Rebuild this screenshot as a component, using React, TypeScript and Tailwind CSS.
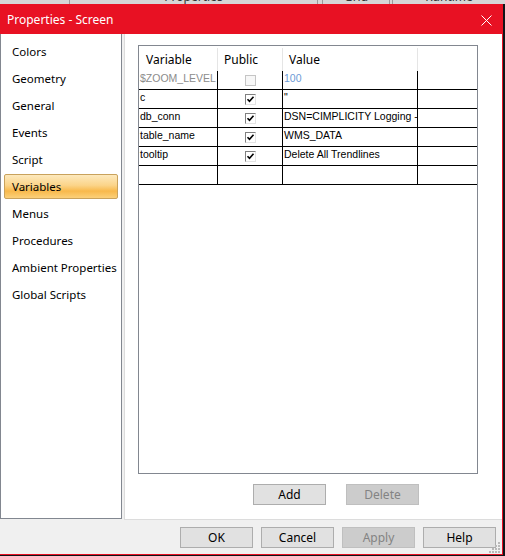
import React from 'react'

const ui = '"Noto Sans", "Open Sans", sans-serif'
const grid = '"Liberation Sans", Arial, sans-serif'

const navItems = [
  'Colors',
  'Geometry',
  'General',
  'Events',
  'Script',
  'Variables',
  'Menus',
  'Procedures',
  'Ambient Properties',
  'Global Scripts',
]

type Row = { name: string; pub: boolean | null; value: string }

const rows: Row[] = [
  { name: '$ZOOM_LEVEL', pub: null, value: '100' },
  { name: 'c', pub: true, value: '"' },
  { name: 'db_conn', pub: true, value: 'DSN=CIMPLICITY Logging - Prop' },
  { name: 'table_name', pub: true, value: 'WMS_DATA' },
  { name: 'tooltip', pub: true, value: 'Delete All Trendlines' },
  { name: '', pub: false, value: '' },
]

function CheckBox({ state }: { state: boolean | null }) {
  if (state === null) {
    return <div className="h-[11px] w-[11px] border border-[#c5c5c5] bg-[#f7f7f7]" />
  }
  return (
    <div className="h-[11px] w-[11px] border-t border-l border-t-[#808080] border-l-[#808080] border-r border-b border-r-[#e3e3e3] border-b-[#e3e3e3] bg-white flex items-center justify-center">
      <svg width="9" height="9" viewBox="0 0 9 9">
        <path d="M1.5 4.2 L3.5 6.3 L7.5 1.8" stroke="#000" strokeWidth="1.6" fill="none" />
      </svg>
    </div>
  )
}

function Btn({ label, disabled }: { label: string; disabled?: boolean }) {
  return (
    <div
      className={`w-[73px] h-[21px] flex items-center justify-center text-[12px] border ${
        disabled ? 'bg-[#cccccc] border-[#bfbfbf] text-[#838383]' : 'bg-[#e1e1e1] border-[#adadad] text-black'
      }`}
    >
      {label}
    </div>
  )
}

export default function App() {
  return (
    <div className="relative w-[505px] h-[556px] overflow-hidden bg-[#101418]" style={{ fontFamily: ui }}>
      {/* background app tabs peeking above the dialog */}
      <div className="flex h-[4px] bg-[#d6d6d6] overflow-hidden text-[12px] leading-[12px] text-[#333]">
        <div className="w-[70px] border-r border-[#9a9a9a]" />
        <div className="w-[248px] border-r border-[#9a9a9a] flex justify-center">
          <span className="-mt-[9px]">Properties</span>
        </div>
        <div className="w-[5px] border-r border-[#9a9a9a]" />
        <div className="w-[67px] border-r border-[#9a9a9a] flex justify-center">
          <span className="-mt-[9px]">Grid</span>
        </div>
        <div className="w-[3px] border-r border-[#9a9a9a]" />
        <div className="flex-1 flex justify-center">
          <span className="-mt-[9px]">Runtime</span>
        </div>
      </div>

      <div className="flex flex-col w-[503px] h-[551px] border-r border-b border-[#e81123] bg-[#f0f0f0]">
        {/* title bar */}
        <div className="h-[30px] bg-[#e81123] flex items-center justify-between pl-[7px] pr-[10px] pt-[2px] text-white text-[12px]">
          <span>Properties - Screen</span>
          <svg width="11" height="11" viewBox="0 0 11 11">
            <path d="M0.5 0.5 L10.5 10.5 M10.5 0.5 L0.5 10.5" stroke="#fff" strokeWidth="1" />
          </svg>
        </div>

        {/* content */}
        <div className="flex h-[486px]">
          <div className="w-[122px] h-[485px] bg-white border-l border-r border-b border-[#828790] pt-[4px]">
            {navItems.map((item) => (
              <div key={item} className="h-[27px] px-[3px] py-[1px]">
                <div
                  className={`h-[25px] flex items-center pl-[7px] text-[11.5px] whitespace-nowrap rounded-[2px] border ${
                    item === 'Variables'
                      ? 'border-[#c9a25c] bg-[linear-gradient(#fde9bd,#fbd489_45%,#f8b94c_70%,#fbd07a)]'
                      : 'border-transparent'
                  } text-black`}
                >
                  {item}
                </div>
              </div>
            ))}
          </div>

          <div className="w-[2px]" />

          <div className="flex-1 bg-white border-l border-b border-[#dcdcdc] flex flex-col pl-[13px] pt-[11px]">
            <div className="w-[340px] h-[429px] border border-[#828790] bg-white overflow-hidden">
              {/* header */}
              <div className="flex h-[25px] text-[12px] text-black">
                <div className="w-[79px] pl-[7px] mt-[2px] h-[23px] flex items-center border-r border-[#e5e5e5]">Variable</div>
                <div className="w-[65px] pl-[6px] mt-[2px] h-[23px] flex items-center border-r border-[#e5e5e5]">Public</div>
                <div className="w-[135px] pl-[6px] mt-[2px] h-[23px] flex items-center border-r border-[#e5e5e5]">Value</div>
                <div className="flex-1" />
              </div>
              {/* rows */}
              {rows.map((r, i) => (
                <div key={i} className="flex h-[19px] border-b border-black text-[10.5px]" style={{ fontFamily: grid }}>
                  <div
                    className={`w-[79px] border-r border-black pl-[1px] pb-[2px] flex items-center overflow-hidden whitespace-nowrap ${
                      r.pub === null ? 'text-[#8c8c8c]' : 'text-black'
                    }`}
                  >
                    {r.name}
                  </div>
                  <div className="w-[65px] border-r border-black flex items-center justify-center">
                    {r.name !== '' && <CheckBox state={r.pub} />}
                  </div>
                  <div
                    className={`w-[135px] border-r border-black pl-[1px] pb-[2px] flex items-center overflow-hidden whitespace-nowrap ${
                      r.pub === null ? 'text-[#6d9bd6]' : 'text-black'
                    }`}
                  >
                    {r.value}
                  </div>
                  <div className="flex-1" />
                </div>
              ))}
            </div>

            <div className="flex gap-[20px] mt-[10px] pl-[115px]">
              <Btn label="Add" />
              <Btn label="Delete" disabled />
            </div>
          </div>
        </div>

        {/* footer */}
        <div className="flex-1 flex justify-end gap-[8px] pt-[7px] pr-[6px]">
          <Btn label="OK" />
          <Btn label="Cancel" />
          <Btn label="Apply" disabled />
          <Btn label="Help" />
        </div>
      </div>

      {/* resize grip */}
      <svg className="absolute left-[489px] top-[541px]" width="12" height="12" viewBox="0 0 12 12">
        {[
          [10, 2], [10, 5], [7, 5], [10, 8], [7, 8], [4, 8], [10, 11], [7, 11], [4, 11], [1, 11],
        ].map(([x, y], i) => (
          <rect key={i} x={x - 1} y={y - 1} width="2" height="2" fill="#b9b9b9" />
        ))}
      </svg>
    </div>
  )
}
